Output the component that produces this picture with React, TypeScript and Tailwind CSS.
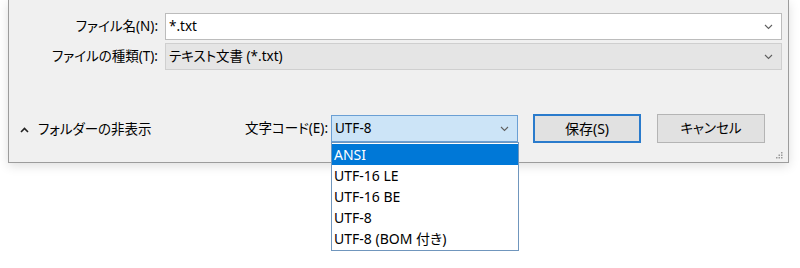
const font = "font-['Noto_Sans','Noto_Sans_CJK_JP',sans-serif] [font-feature-settings:'palt']";

const Chevron = ({ className = "" }: { className?: string }) => (
    <svg width="9" height="6" viewBox="0 0 9 6" className={className}>
        <path d="M1 1 L4.5 4.5 L8 1" fill="none" stroke="#606060" strokeWidth="1.1" />
    </svg>
);

const encodings = ["ANSI", "UTF-16 LE", "UTF-16 BE", "UTF-8", "UTF-8 (BOM 付き)"];

const App = () => {
    return (
        <div className={`relative w-[800px] h-[268px] bg-white overflow-hidden text-[13.5px] text-black whitespace-nowrap ${font}`}>
            <div className="relative ml-[8px] w-[781px] h-[163px] bg-[#f0f0f0] border-x border-b border-[#9c9c9c] shadow-[0_3px_10px_rgba(0,0,0,0.13)]">
                <div className="pt-[13px] flex flex-col gap-[3px]">
                    <div className="flex items-center h-[27px]">
                        <div className="w-[156px] pr-[7px] text-right leading-none">ファイル名(N):</div>
                        <div className="flex-1 mr-[6px] h-full bg-white border border-[#bcbcbc] flex items-center pl-[3px] pr-[8px]">
                            <span className="flex-1 leading-none">*.txt</span>
                            <Chevron />
                        </div>
                    </div>
                    <div className="flex items-center h-[27px]">
                        <div className="w-[156px] pr-[7px] text-right leading-none">ファイルの種類(T):</div>
                        <div className="flex-1 mr-[6px] h-full bg-[#e5e5e5] border border-[#cfcfcf] flex items-center pl-[3px] pr-[8px]">
                            <span className="flex-1 leading-none">テキスト文書 (*.txt)</span>
                            <Chevron />
                        </div>
                    </div>
                </div>

                <div className="mt-[44px] flex items-center h-[29px]">
                    <div className="flex items-center w-[236px] pl-[11px] gap-[9px] pt-[2px]">
                        <svg width="9" height="6" viewBox="0 0 9 6">
                            <path d="M1 5 L4.5 1.5 L8 5" fill="none" stroke="#222" strokeWidth="1.6" />
                        </svg>
                        <span className="leading-none">フォルダーの非表示</span>
                    </div>
                    <span className="leading-none w-[86px]">文字コード(E):</span>
                    <div className="w-[187px] h-[27px] bg-[#cce4f7] border border-[#6a9fd4] flex items-center pl-[3px] pr-[8px]">
                        <span className="flex-1 leading-none">UTF-8</span>
                        <Chevron />
                    </div>
                    <button className="ml-[15px] w-[108px] h-[29px] bg-[#e1e1e1] border-2 border-[#2a7bcc] leading-none text-[14px]">
                        保存(S)
                    </button>
                    <button className="ml-[16px] w-[108px] h-[29px] bg-[#e1e1e1] border border-[#b4b4b4] leading-none">
                        キャンセル
                    </button>
                </div>

                <svg width="7" height="7" viewBox="0 0 7 7" className="absolute right-[5px] bottom-[3px]">
                    <rect x="5" y="0" width="1.5" height="1.5" fill="#9a9a9a" />
                    <rect x="2.5" y="2.5" width="1.5" height="1.5" fill="#9a9a9a" />
                    <rect x="5" y="2.5" width="1.5" height="1.5" fill="#9a9a9a" />
                    <rect x="0" y="5" width="1.5" height="1.5" fill="#9a9a9a" />
                    <rect x="2.5" y="5" width="1.5" height="1.5" fill="#9a9a9a" />
                    <rect x="5" y="5" width="1.5" height="1.5" fill="#9a9a9a" />
                </svg>
            </div>

            <div className="absolute left-[331px] top-[142px] w-[188px] bg-white border border-[#7096bd] pt-[1px] pb-[1px] text-[14px]">
                {encodings.map((e, i) => (
                    <div
                        key={e}
                        className={`h-[21px] flex items-center pl-[2px] leading-none ${i === 0 ? "bg-[#0078d7] text-white" : ""}`}
                    >
                        {e}
                    </div>
                ))}
            </div>
        </div>
    );
};

export default App;
